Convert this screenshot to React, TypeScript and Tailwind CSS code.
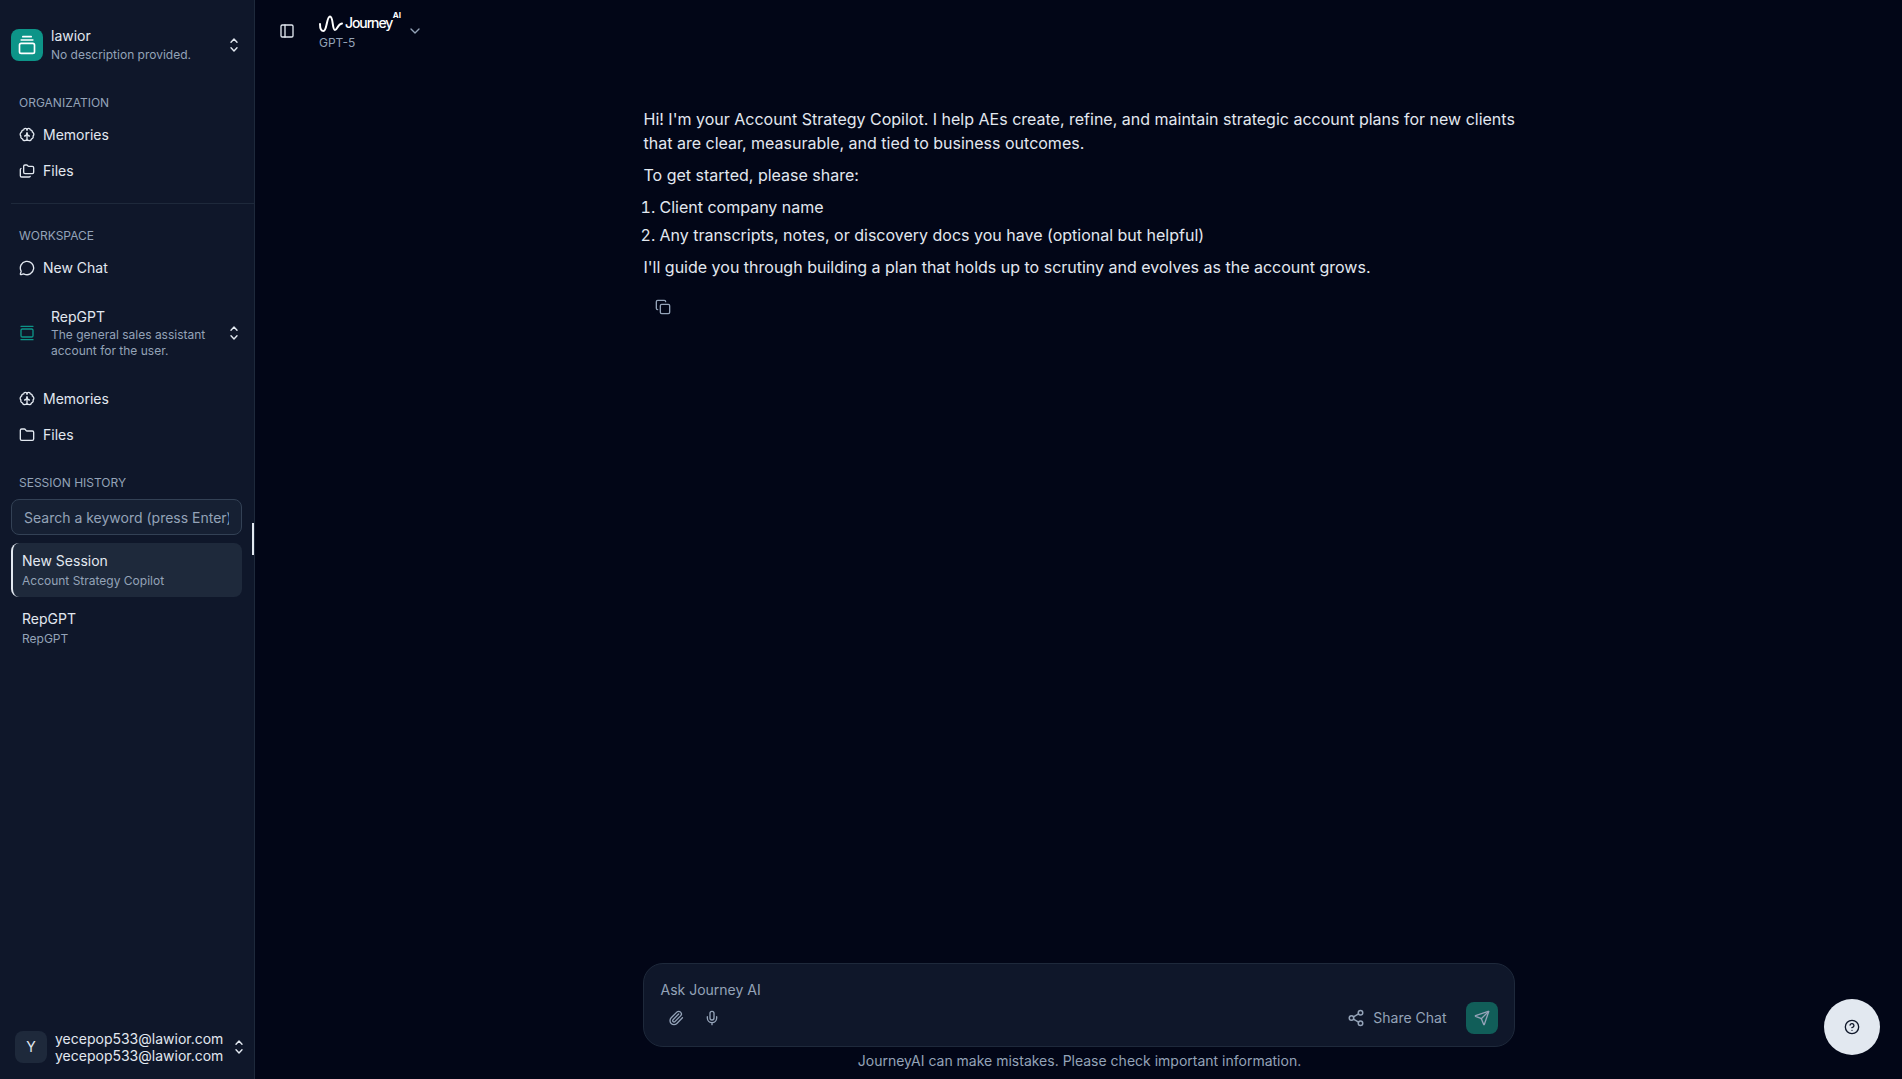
import { ChevronDown, CircleHelp, Copy, Folder, Folders, GalleryVertical, GalleryVerticalEnd, MessageCircle, Mic, PanelLeft, Paperclip, Send, Share2 } from "lucide-react";

function BrainIcon() {
  return (
    <svg width="16" height="16" viewBox="0 0 24 24" fill="none" stroke="currentColor" strokeWidth="2" strokeLinecap="round" strokeLinejoin="round" className="shrink-0">
      <path d="M12 4.5A2.5 2.5 0 0 0 9.5 2a2.5 2.5 0 0 0-2.5 2.2 3 3 0 0 0-3 3.2 2.5 2.5 0 0 0-1.2 1.4 3 3 0 0 0 .2 4.7 3 3 0 0 0 2.2 4.3 3 3 0 0 0 4.3 2.2A2.5 2.5 0 0 0 12 19.5" />
      <path d="M12 4.5A2.5 2.5 0 0 1 14.5 2a2.5 2.5 0 0 1 2.5 2.2 3 3 0 0 1 3 3.2 2.5 2.5 0 0 1 1.2 1.4 3 3 0 0 1-.2 4.7 3 3 0 0 1-2.2 4.3 3 3 0 0 1-4.3 2.2A2.5 2.5 0 0 1 12 19.5" />
      <path d="M12 20V9" />
      <path d="M15.5 13.5A4.5 4.5 0 0 1 12 9a4.5 4.5 0 0 1-3.5 4.5" />
    </svg>
  );
}

function UpDown({ className }: { className: string }) {
  return (
    <svg width="8" height="14" viewBox="0 0 8 14" fill="none" stroke="currentColor" strokeWidth="1.4" strokeLinecap="round" strokeLinejoin="round" className={className}>
      <path d="M1 4.2 4 1l3 3.2" />
      <path d="M1 9.8 4 13l3-3.2" />
    </svg>
  );
}

function NavItem({ icon, label }: { icon: React.ReactNode; label: string }) {
  return (
    <div className="flex h-9 items-center gap-2 pl-[19px] text-sm text-[#e2e8f0]">
      {icon}
      <span>{label}</span>
    </div>
  );
}

function Heading({ label, className }: { label: string; className: string }) {
  return <div className={"pl-[19px] text-xs leading-4 text-[#94a3b8] " + className}>{label}</div>;
}

function Logo() {
  return (
    <div className="relative flex h-[20px] w-[81px] items-center text-white">
      <svg width="25" height="18" viewBox="0 0 25 18" fill="none" stroke="currentColor" strokeWidth="2" strokeLinecap="round">
        <path d="M1 9 C1 13 2 16 4.5 16 C8 16 7.5 1.5 11 1.5 C14.5 1.5 13 15 16 15 C18.5 15 18.5 9 23 8.5" />
      </svg>
      <span className="mt-[-2px] ml-[1px] text-[14px] leading-none font-medium tracking-[-1.1px]">Journey</span>
      <span className="absolute top-[-3px] right-[-1px] text-[8px] leading-none font-bold">AI</span>
    </div>
  );
}

export default function App() {
  return (
    <div className="flex h-[1079px] w-[1902px] overflow-hidden bg-[#020617] font-['Inter',sans-serif] text-[#e2e8f0]">
      <aside className="relative flex h-full w-[255px] shrink-0 flex-col border-r border-[#1e293b] bg-[#0f172a]">
        <div className="mt-[29px] ml-[11px] flex h-8 items-start">
          <div className="flex h-8 w-8 items-center justify-center rounded-lg bg-[#0d9488] text-white">
            <GalleryVerticalEnd size={20} strokeWidth={2} />
          </div>
          <div className="mt-[-3px] ml-[8px] flex-1">
            <div className="mb-[1px] text-sm leading-5 text-[#e2e8f0]">lawior</div>
            <div className="text-xs leading-4 text-[#94a3b8]">No description provided.</div>
          </div>
          <UpDown className="mt-[9px] mr-[16px] text-[#e2e8f0]" />
        </div>

        <Heading label="ORGANIZATION" className="mt-[34px]" />
        <div className="mt-[6px]">
          <NavItem icon={<BrainIcon />} label="Memories" />
          <NavItem icon={<Folders size={16} />} label="Files" />
        </div>
        <div className="mt-[14px] ml-[11px] h-px bg-[#1e293b]" />

        <Heading label="WORKSPACE" className="mt-[24px]" />
        <div className="mt-[6px]">
          <NavItem icon={<MessageCircle size={16} />} label="New Chat" />
        </div>

        <div className="mt-[14px] ml-[11px] flex h-[66px] items-center">
          <div className="flex h-8 w-8 items-center justify-center text-[#0d9488]">
            <GalleryVertical size={16} />
          </div>
          <div className="ml-[8px] flex-1">
            <div className="text-sm leading-5 text-[#e2e8f0]">RepGPT</div>
            <div className="text-xs leading-4 text-[#94a3b8]">The general sales assistant<br />account for the user.</div>
          </div>
          <UpDown className="mr-[16px] text-[#e2e8f0]" />
        </div>

        <div className="mt-[15px]">
          <NavItem icon={<BrainIcon />} label="Memories" />
          <NavItem icon={<Folder size={16} />} label="Files" />
        </div>

        <Heading label="SESSION HISTORY" className="mt-[22px]" />
        <input
          readOnly
          placeholder="Search a keyword (press Enter)"
          className="mt-[8px] ml-[11px] h-[36px] w-[231px] rounded-lg border border-[#334155] bg-[#1e293b]/50 px-[12px] text-sm text-[#e2e8f0] outline-none placeholder:text-[#94a3b8]"
        />
        <div className="mt-[8px] ml-[11px] h-[54px] w-[231px] rounded-lg border-l-2 border-[#e2e8f0] bg-[#1e293b] pt-[8px] pl-[9px]">
          <div className="text-sm leading-5 text-[#e2e8f0]">New Session</div>
          <div className="mt-[2px] text-xs leading-4 text-[#94a3b8]">Account Strategy Copilot</div>
        </div>
        <div className="mt-[4px] ml-[11px] h-[54px] w-[231px] pt-[8px] pl-[11px]">
          <div className="text-sm leading-5 text-[#e2e8f0]">RepGPT</div>
          <div className="mt-[2px] text-xs leading-4 text-[#94a3b8]">RepGPT</div>
        </div>

        <div className="absolute top-[523px] right-0 h-[32px] w-[2px] bg-[#e2e8f0]" />

        <div className="mt-auto mb-[16px] ml-[15px] flex h-8 items-center">
          <div className="flex h-8 w-8 items-center justify-center rounded-lg bg-[#1e293b] text-sm text-[#e2e8f0]">Y</div>
          <div className="ml-[8px] text-sm leading-[17px] text-[#e2e8f0]">
            <div>yecepop533@lawior.com</div>
            <div>yecepop533@lawior.com</div>
          </div>
          <UpDown className="ml-[12px] text-[#e2e8f0]" />
        </div>
      </aside>

      <main className="relative flex h-full flex-1 flex-col">
        <header className="flex h-[60px] items-start">
          <PanelLeft size={16} className="mt-[23px] ml-[24px] text-[#e2e8f0]" />
          <div className="mt-[14px] ml-[24px]">
            <Logo />
            <div className="mt-[1px] text-xs leading-4 text-[#94a3b8]">GPT-5</div>
          </div>
          <ChevronDown size={16} className="mt-[23px] ml-[7px] text-[#94a3b8]" />
        </header>

        <div className="mx-auto mt-[47px] w-[872px] flex-1 text-base leading-6 text-[#e2e8f0]">
          <p className="mr-[-6px] pl-[1px]">Hi! I'm your Account Strategy Copilot. I help AEs create, refine, and maintain strategic account plans for new clients that are clear, measurable, and tied to business outcomes.</p>
          <p className="mt-2 pl-[1px]">To get started, please share:</p>
          <ol className="mt-2 list-decimal pl-[17px]">
            <li className="mb-1">Client company name</li>
            <li>Any transcripts, notes, or discovery docs you have (optional but helpful)</li>
          </ol>
          <p className="mt-2 pl-[1px]">I'll guide you through building a plan that holds up to scrutiny and evolves as the account grows.</p>
          <Copy size={16} className="mt-[20px] ml-[12px] text-[#94a3b8]" />
        </div>

        <div className="mx-auto flex h-[84px] w-[872px] flex-col rounded-[20px] border border-[#1e293b] bg-[#0f172a] pt-[16px] pr-[16px] pl-[17px]">
          <div className="text-sm leading-5 text-[#94a3b8]">Ask Journey AI</div>
          <div className="mt-[2px] flex h-8 items-center text-[#94a3b8]">
            <Paperclip size={16} className="ml-[7px]" />
            <Mic size={16} className="ml-[20px]" />
            <Share2 size={18} className="mr-[8px] ml-auto" />
            <span className="text-sm">Share Chat</span>
            <div className="ml-[19px] flex h-8 w-8 items-center justify-center rounded-lg bg-[#115e59] text-[#94a3b8]">
              <Send size={16} />
            </div>
          </div>
        </div>
        <div className="mt-[4px] mb-[8px] pl-[2px] text-center text-sm leading-5 text-[#94a3b8]">JourneyAI can make mistakes. Please check important information.</div>

        <div className="absolute right-[22px] bottom-[24px] flex h-14 w-14 items-center justify-center rounded-full bg-[#e2e8f0] text-[#0f172a]">
          <CircleHelp size={16} />
        </div>
      </main>
    </div>
  );
}
